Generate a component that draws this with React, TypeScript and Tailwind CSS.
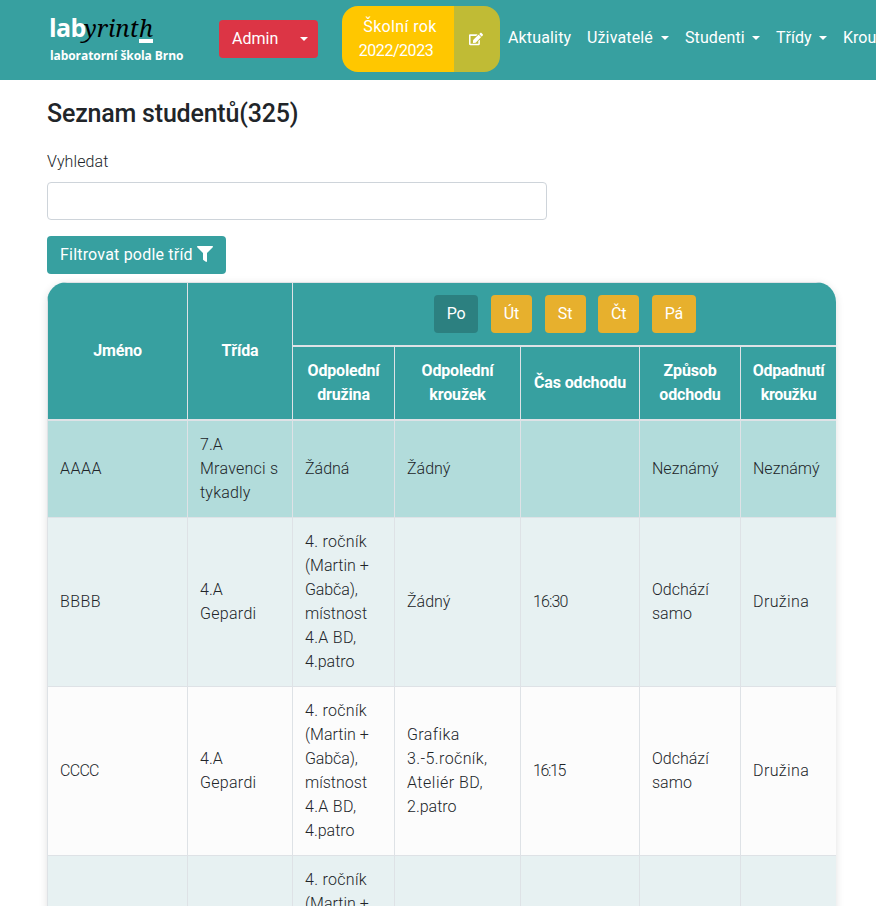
import { FaEdit, FaFilter } from "react-icons/fa";

function Caret({ className = "" }: { className?: string }) {
  return (
    <span
      className={`inline-block h-0 w-0 shrink-0 border-x-[4.5px] border-t-[4.5px] border-x-transparent border-t-current ${className}`}
    />
  );
}

function Logo() {
  return (
    <div className="ml-[49px] w-[135px] shrink-0 pt-[11px] text-white">
      <div className="flex h-[33px] items-baseline whitespace-nowrap leading-[33px]">
        <span className="w-[35px] font-['Open_Sans','Noto_Sans',sans-serif] text-[25px] font-bold tracking-[-0.6px]">lab</span>
        <span className="font-['Noto_Serif','Liberation_Serif',serif] text-[24px] italic tracking-[0.05px] text-black">
          yrint
          <span className="relative">
            h
            <span className="absolute right-0 top-[28px] h-1 w-[14px] bg-white" />
          </span>
        </span>
      </div>
      <div className="whitespace-nowrap pl-px font-['Open_Sans','Noto_Sans',sans-serif] text-[12px] font-bold leading-[23px] tracking-[-0.08px]">
        laboratorní škola Brno
      </div>
    </div>
  );
}

const days = [
  { name: "Po", style: "w-11 bg-[#2c8080]" },
  { name: "Út", style: "w-[41px] bg-[#e7b02d]" },
  { name: "St", style: "w-[41px] bg-[#e7b02d]" },
  { name: "Čt", style: "w-[41px] bg-[#e7b02d]" },
  { name: "Pá", style: "w-11 bg-[#e7b02d]" },
];

const group = ["4. ročník", "(Martin +", "Gabča),", "místnost", "4.A BD,", "4.patro"];

// Letter spacing for the strings whose natural width is off
const tracking: Record<string, string> = {
  AAAA: "tracking-[0.5px]",
  BBBB: "tracking-[0.4px]",
  CCCC: "tracking-[-0.7px]",
  "16:30": "tracking-[-0.9px]",
  "16:15": "tracking-[-1.4px]",
  "Mravenci s": "tracking-[0.25px]",
  tykadly: "tracking-[0.2px]",
  Gepardi: "tracking-[0.3px]",
  "4. ročník": "tracking-[0.3px]",
  "Gabča),": "tracking-[-0.1px]",
  "4.A BD,": "tracking-[0.3px]",
  Grafika: "tracking-[0.4px]",
  "3.-5.ročník,": "tracking-[0.4px]",
  "Ateliér BD,": "tracking-[0.5px]",
  Družina: "tracking-[0.4px]",
};

const rows = [
  {
    bg: "h-[97px] bg-[#b2dcdb]",
    cells: [["AAAA"], ["7.A", "Mravenci s", "tykadly"], ["Žádná"], ["Žádný"], [], ["Neznámý"], ["Neznámý"]],
  },
  {
    bg: "h-[169px] bg-[#e7f1f2]",
    cells: [["BBBB"], ["4.A", "Gepardi"], group, ["Žádný"], ["16:30"], ["Odchází", "samo"], ["Družina"]],
  },
  {
    bg: "h-[169px] bg-[#fcfcfc]",
    cells: [
      ["CCCC"],
      ["4.A", "Gepardi"],
      group,
      ["Grafika", "3.-5.ročník,", "Ateliér BD,", "2.patro"],
      ["16:15"],
      ["Odchází", "samo"],
      ["Družina"],
    ],
  },
  { bg: "h-[169px] bg-[#e7f1f2]", cells: [[], [], group, [], [], [], []] },
];

function Head({ lines, className = "" }: { lines: string[]; className?: string }) {
  return (
    <div className={`flex flex-col items-center justify-center whitespace-nowrap border-l border-[#dee2e6] ${className}`}>
      {lines.map((l) => (
        <span key={l}>{l}</span>
      ))}
    </div>
  );
}

export default function App() {
  return (
    <div className="h-[906px] w-[876px] overflow-hidden bg-white font-[Roboto,'Liberation_Sans',sans-serif] text-base leading-6 text-[#212529]">
      <nav className="flex h-20 items-start overflow-hidden bg-[#37a0a0] text-white">
        <Logo />
        <button className="ml-[35px] mt-5 flex h-[38px] w-[99px] shrink-0 items-center justify-between rounded bg-[#dc3545] pl-[13px] pr-[10px]">
          Admin
          <Caret />
        </button>
        <div className="ml-6 mt-1.5 flex h-[66px] w-[158px] shrink-0 overflow-hidden rounded-[16px]">
          <div className="flex w-28 flex-col items-center justify-center bg-[#ffc700]">
            <span className="ml-1 tracking-[0.35px]">Školní rok</span>
            <span className="mr-1 tracking-[-0.45px]">2022/2023</span>
          </div>
          <div className="flex flex-1 items-center justify-center bg-[#c0bb35] pr-0.5">
            <FaEdit className="text-[14px]" />
          </div>
        </div>
        <div className="flex h-full items-center whitespace-nowrap pb-1 pl-2">
          <span className="w-[79px] shrink-0 tracking-[0.15px]">Aktuality</span>
          <span className="flex w-[98px] shrink-0 items-center">
            <span className="w-[74px] tracking-[0.15px]">Uživatelé</span>
            <Caret />
          </span>
          <span className="flex w-[91px] shrink-0 items-center">
            <span className="w-[67px] tracking-[0.1px]">Studenti</span>
            <Caret />
          </span>
          <span className="flex w-[67px] shrink-0 items-center">
            <span className="w-[43px]">Třídy</span>
            <Caret />
          </span>
          <span>Kroužky</span>
        </div>
      </nav>

      <main className="pl-[47px]">
        <h1 className="h-[70px] pt-[18px] text-[25px] font-medium leading-8 tracking-[-0.2px]">Seznam studentů(325)</h1>
        <label className="block h-8 font-light tracking-[0.1px]">Vyhledat</label>
        <input className="block h-[38px] w-[500px] rounded border border-[#ced4da] bg-white" />
        <button className="mt-4 flex h-[38px] w-[179px] items-center rounded bg-[#37a0a0] pl-[13px] text-white">
          <span className="w-[137px] whitespace-nowrap text-left tracking-[0.2px]">Filtrovat podle tříd</span>
          <FaFilter className="mb-0.5 text-[16px]" />
        </button>

        <div className="mt-2 w-[789px] overflow-hidden rounded-t-[20px] shadow-[0_2px_8px_rgba(0,0,0,0.12)]">
          <div className="grid h-[139px] grid-cols-[140px_105px_544px] border-b-2 border-t border-[#dee2e6] bg-[#37a0a0] font-bold tracking-[-0.15px] text-white">
            <Head lines={["Jméno"]} />
            <Head lines={["Třída"]} />
            <div>
              <div className="flex h-16 items-center justify-center gap-[12.7px] border-b-2 border-l border-[#dee2e6] pl-px font-normal">
                {days.map((d) => (
                  <button key={d.name} className={`h-[38px] rounded text-center ${d.style}`}>
                    {d.name}
                  </button>
                ))}
              </div>
              <div className="grid h-[72px] grid-cols-[102px_126px_119px_101px_96px]">
                <Head lines={["Odpolední", "družina"]} />
                <Head lines={["Odpolední", "kroužek"]} />
                <Head lines={["Čas odchodu"]} />
                <Head lines={["Způsob", "odchodu"]} />
                <Head lines={["Odpadnutí", "kroužku"]} className="tracking-[-0.3px]" />
              </div>
            </div>
          </div>
          {rows.map((r, i) => (
            <div
              key={i}
              className={`grid grid-cols-[140px_105px_102px_126px_119px_101px_96px] border-b border-[#dee2e6] font-light ${r.bg}`}
            >
              {r.cells.map((c, j) => (
                <div key={j} className="flex flex-col justify-center whitespace-nowrap border-l border-[#dee2e6] pl-3">
                  {c.map((l) => (
                    <span key={l} className={tracking[l] ?? ""}>
                      {l}
                    </span>
                  ))}
                </div>
              ))}
            </div>
          ))}
        </div>
      </main>
    </div>
  );
}
